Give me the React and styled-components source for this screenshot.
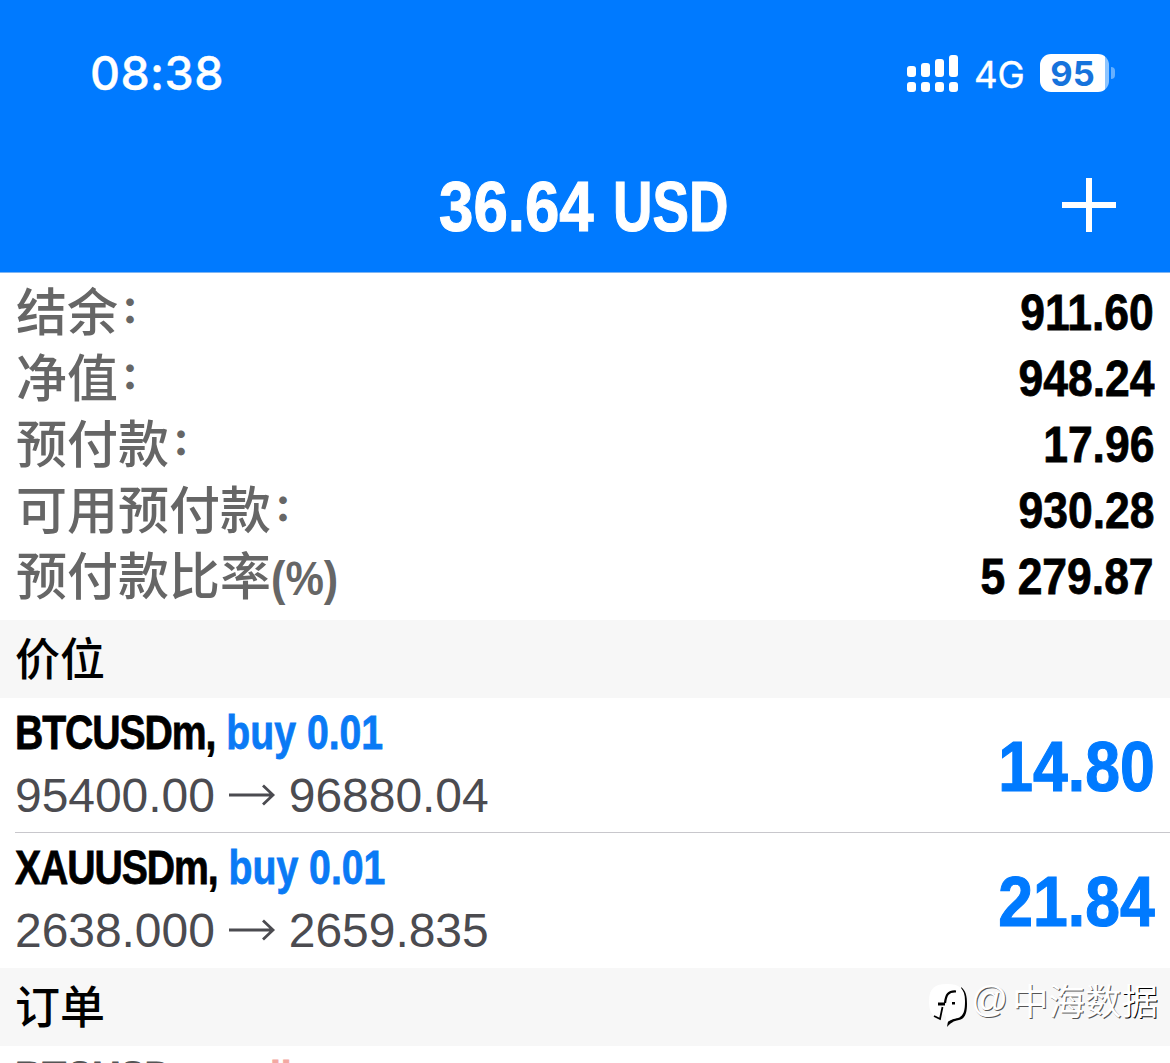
import React from "react";
import styled, { createGlobalStyle } from "styled-components";

const GlobalStyle = createGlobalStyle`
    body {
        margin: 0;
        background-color: #fff;
        font-family: "Liberation Sans", "Noto Sans CJK SC", sans-serif;
    }
`;

const StyledScreen = styled.div`
    position: relative;
    width: 1170px;
    height: 1063px;
    overflow: hidden;
    background-color: #fff;
    color: #000;
`;

const StyledHeader = styled.header`
    box-sizing: border-box;
    height: 273px;
    background-color: #007aff;
    border-bottom: 1px solid #7fb5f2;
    color: #fff;
`;

const StyledStatusBar = styled.div`
    display: flex;
    align-items: center;
    justify-content: space-between;
    height: 146px;
    padding: 0 55px 0 90px;
    font-family: Inter, "Liberation Sans", sans-serif;
`;

const StyledTime = styled.span`
    font-size: 46.5px;
    font-weight: 500;
    line-height: 56px;
    letter-spacing: 0.4px;
    -webkit-text-stroke: 0.4px #fff;
`;

const StyledIndicators = styled.div`
    display: flex;
    align-items: center;
    height: 40px;
`;

const StyledNetwork = styled.span`
    margin: 4px 16px 0 15px;
    width: 50px;
    font-size: 36.5px;
    line-height: 40px;
    white-space: nowrap;
    -webkit-text-stroke: 0.4px #fff;
`;

const StyledBattery = styled.div`
    display: flex;
    align-items: center;
    justify-content: center;
    box-sizing: border-box;
    width: 69px;
    height: 38px;
    padding-right: 4px;
    border-radius: 11px;
    background: linear-gradient(to right, #fff 65px, #8cc4ff 65px);
    color: #1673dc;
    font-size: 34.5px;
    font-weight: 700;
`;

const StyledBatteryTip = styled.div`
    width: 4px;
    height: 12px;
    margin-left: 2px;
    border-radius: 0 6px 6px 0;
    background-color: #66b0ff;
`;

const StyledTitleBar = styled.div`
    display: grid;
    grid-template-columns: 1fr auto 1fr;
    align-items: center;
    height: 126px;
    padding: 0 54px;
`;

const StyledAddButton = styled.button`
    grid-column: 3;
    justify-self: end;
    padding: 0;
    border: none;
    background: none;
    line-height: 0;
    margin-top: -8px;
`;

// Bold sans squeezed horizontally to look like a condensed face
const Condensed = styled.span`
    display: block;
    font-size: ${(props) => props.$size}px;
    font-weight: 700;
    line-height: 1.15;
    color: ${(props) => props.$color || "inherit"};
    white-space: pre;
    -webkit-text-stroke: 0.016em currentColor;
    transform: scaleX(${(props) => props.$squeeze || 0.88});
    transform-origin: ${(props) => props.$origin || "left"} center;
`;

const StyledTitle = styled.h1`
    grid-column: 2;
    display: flex;
    gap: 20px;
    margin: -4px 0 0;
    padding-left: 9px;
`;

const StyledSummary = styled.dl`
    box-sizing: border-box;
    height: 347px;
    margin: 0;
    padding: 7px 16px 0 16px;
`;

const StyledSummaryRow = styled.div`
    display: flex;
    align-items: center;
    justify-content: space-between;
    height: 66px;
`;

const StyledLabel = styled.dt`
    display: flex;
    height: 66px;
    margin-top: -8px;
    color: #666;
    font-family: "Noto Sans CJK SC", sans-serif;
    font-size: 51px;
    font-weight: 500;
    line-height: 66px;
    white-space: nowrap;
`;

const StyledColon = styled.span`
    margin-left: 3px;
    font-size: 36px;
    font-weight: 900;
    line-height: 63px;
`;

const StyledUnit = styled.span`
    font-family: "Liberation Sans", sans-serif;
    font-weight: 700;
    font-size: 48px;
    line-height: 78px;
    transform: scaleX(0.9);
    transform-origin: left center;
`;

const StyledValue = styled.dd`
    margin: 0;
`;

const StyledSection = styled.h2`
    box-sizing: border-box;
    height: 78px;
    margin: 0;
    padding-left: 15px;
    background-color: #f7f7f7;
    font-family: "Noto Sans CJK SC", sans-serif;
    font-size: 45px;
    font-weight: 500;
    line-height: 74px;
`;

const StyledPosition = styled.div`
    display: flex;
    align-items: center;
    justify-content: space-between;
    box-sizing: border-box;
    height: 135px;
    margin-left: 15px;
    padding-right: 15px;
    border-bottom: 1px solid ${(props) => (props.$last ? "transparent" : "#c8c7cc")};
`;

const StyledDetails = styled.div`
    display: flex;
    flex-direction: column;
    height: 135px;
    padding-top: ${(props) => props.$top || 8}px;
    box-sizing: border-box;
`;

const StyledProfit = styled.div`
    padding-top: 4px;
`;

const StyledSymbol = styled.span`
    letter-spacing: -1.3px;
`;

const StyledSide = styled.span`
    color: ${(props) => (props.$sell ? "#f3a9a2" : "#0a7af5")};
`;

const StyledPrices = styled.div`
    display: flex;
    align-items: center;
    margin-top: 8px;
    color: #4b4b50;
    font-size: 48px;
    line-height: 55px;
    letter-spacing: -0.05px;

    svg {
        margin: -2px 13px 0;
    }
`;

const StyledWatermark = styled.div`
    position: absolute;
    top: 979px;
    left: 927px;
    display: flex;
    align-items: flex-start;
    color: #fff;
    font-family: "Noto Sans CJK SC", sans-serif;
    font-size: 36.5px;
    line-height: 41px;
    white-space: nowrap;
`;

const StyledWatermarkText = styled.span`
    text-shadow: 1px 1px 0 ${(props) => props.$shadow || "#555"};
`;

const StyledAt = styled(StyledWatermarkText)`
    width: 41px;
    margin-left: 2px;
    font-family: "Liberation Sans", sans-serif;
`;

const summary = [
    { label: "结余", value: "911.60" },
    { label: "净值", value: "948.24" },
    { label: "预付款", value: "17.96" },
    { label: "可用预付款", value: "930.28" },
    { label: "预付款比率", unit: "(%)", value: "5 279.87" },
];

const positions = [
    { symbol: "BTCUSDm", side: "buy 0.01", open: "95400.00", current: "96880.04", profit: "14.80" },
    { symbol: "XAUUSDm", side: "buy 0.01", open: "2638.000", current: "2659.835", profit: "21.84" },
];

function SignalIcon() {
    const bars = [11, 14, 18, 22];
    return (
        <svg width="52" height="38" viewBox="0 0 52 38" fill="#fff">
            {bars.map((height, i) => (
                <React.Fragment key={i}>
                    <rect x={i * 14} y={23 - height} width="9" height={height} rx="3" />
                    <rect x={i * 14} y="28" width="9" height="10" rx="3" />
                </React.Fragment>
            ))}
        </svg>
    );
}

function ArrowIcon() {
    return (
        <svg width="48" height="24" viewBox="0 0 48 24" fill="none" stroke="#4b4b50" strokeWidth="2.8">
            <path d="M1 12H45M35 2.5L45 12L35 21.5" />
        </svg>
    );
}

function WatermarkLogo() {
    return (
        <svg width="42" height="50" viewBox="0 0 42 50">
            <path
                d="M34 8C39 12 40 17 40 25C40 36 37 40 32 41C26 42 24 44 20 48L21 42L30 38C36 35 37 31 37 24Z"
                fill="#000"
            />
            <path
                d="M20 5C8 5 2 9 2 22C2 33 5 37 13 40L16 34L19 38V45C23 40 27 40 31 39C37 37 38 31 38 22C38 9 32 5 20 5Z"
                fill="#fff"
            />
            <g fill="none" stroke="#000">
                <path d="M29 12.5C21 12 19 16 18 24" strokeWidth="2.2" />
                <path d="M11 25H18" strokeWidth="3" />
                <path d="M15.5 28L13 40L7 37" strokeWidth="1.8" />
            </g>
            <rect x="25" y="23" width="3" height="2.5" fill="#000" />
        </svg>
    );
}

function Position({ data, last }) {
    return (
        <StyledPosition $last={last}>
            <StyledDetails>
                <Condensed $size={47.5} $squeeze={0.825}>
                    <StyledSymbol>{data.symbol},</StyledSymbol> <StyledSide>{data.side}</StyledSide>
                </Condensed>
                <StyledPrices>
                    {data.open}
                    <ArrowIcon />
                    {data.current}
                </StyledPrices>
            </StyledDetails>
            <StyledProfit>
                <Condensed $size={71} $origin="right" $color="#007aff">
                    {data.profit}
                </Condensed>
            </StyledProfit>
        </StyledPosition>
    );
}

export default function App() {
    return (
        <>
            <GlobalStyle />
            <StyledScreen>
                <StyledHeader>
                    <StyledStatusBar>
                        <StyledTime>08:38</StyledTime>
                        <StyledIndicators>
                            <SignalIcon />
                            <StyledNetwork>4G</StyledNetwork>
                            <StyledBattery>95</StyledBattery>
                            <StyledBatteryTip />
                        </StyledIndicators>
                    </StyledStatusBar>
                    <StyledTitleBar>
                        <StyledTitle>
                            <Condensed $size={71} $origin="right" $squeeze={0.87}>
                                36.64
                            </Condensed>
                            <Condensed $size={71} $squeeze={0.77}>
                                USD
                            </Condensed>
                        </StyledTitle>
                        <StyledAddButton aria-label="add">
                            <svg width="54" height="54" viewBox="0 0 54 54" stroke="#fff" strokeWidth="6">
                                <path d="M27 0V54M0 27H54" />
                            </svg>
                        </StyledAddButton>
                    </StyledTitleBar>
                </StyledHeader>
                <StyledSummary>
                    {summary.map((row) => (
                        <StyledSummaryRow key={row.label}>
                            <StyledLabel>
                                {row.label}
                                {row.unit ? <StyledUnit>{row.unit}</StyledUnit> : <StyledColon>：</StyledColon>}
                            </StyledLabel>
                            <StyledValue>
                                <Condensed $size={50.5} $origin="right">
                                    {row.value}
                                </Condensed>
                            </StyledValue>
                        </StyledSummaryRow>
                    ))}
                </StyledSummary>
                <StyledSection>价位</StyledSection>
                {positions.map((data, i) => (
                    <Position key={data.symbol} data={data} last={i === positions.length - 1} />
                ))}
                <StyledSection>订单</StyledSection>
                <StyledPosition $last>
                    <StyledDetails $top={6}>
                        <Condensed $size={47.5} $squeeze={0.825} $color="#555">
                            <StyledSymbol>BTCUSDm,</StyledSymbol> <StyledSide $sell>sell</StyledSide>
                        </Condensed>
                    </StyledDetails>
                </StyledPosition>
                <StyledWatermark>
                    <WatermarkLogo />
                    <StyledAt>@</StyledAt>
                    <StyledWatermarkText>中海数</StyledWatermarkText>
                    <StyledWatermarkText $shadow="#000">据</StyledWatermarkText>
                </StyledWatermark>
            </StyledScreen>
        </>
    );
}
